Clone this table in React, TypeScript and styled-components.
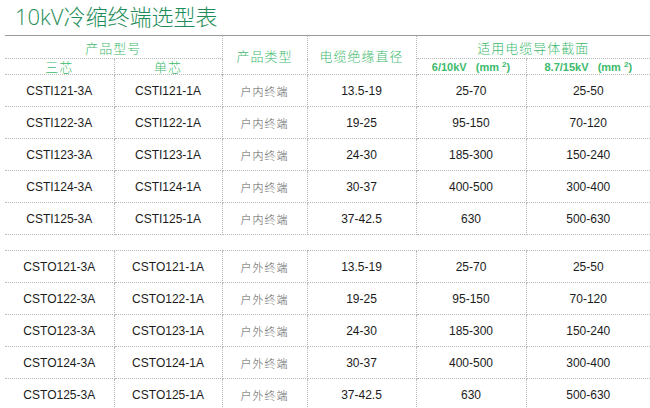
import styled, { createGlobalStyle } from 'styled-components'

const GlobalStyle = createGlobalStyle`
  html, body {
    margin: 0;
    padding: 0;
    background: #ffffff;
  }
`

const colors = {
  title: '#1d8c58',
  head: '#3dba6c',
  text: '#1c1c1c',
  kind: '#5e5e5e',
  dot: '#b9b9b9',
  rule: '#9a9a9a',
}

const Page = styled.div`
  width: 650px;
  height: 408px;
  overflow: hidden;
  background: #fff;
`

const Title = styled.h1`
  margin: 0;
  padding-left: 15px;
  height: 35px;
  line-height: 32px;
  font-family: 'Open Sans', 'Noto Sans CJK SC', sans-serif;
  font-size: 22px;
  font-weight: 300;
  color: ${colors.title};
  white-space: nowrap;
`

const Table = styled.table`
  margin-left: 5px;
  width: 645px;
  table-layout: fixed;
  border-collapse: collapse;
  border-top: 1px solid ${colors.rule};
`

const HeadRow = styled.tr<{ h: number }>`
  height: ${({ h }) => h}px;
`

const Row = styled.tr`
  height: 32px;
`

const Spacer = styled.tr`
  height: 16px;
  td {
    border-left: none;
    border-right: none;
  }
`

const Cell = styled.td`
  padding: 0;
  text-align: center;
  vertical-align: middle;
  border: 1px dotted ${colors.dot};
  &:first-child {
    border-left: none;
  }
  &:last-child {
    border-right: none;
  }
`

const HeadCell = styled(Cell)<{ sans?: boolean }>`
  color: ${colors.head};
  font-family: ${({ sans }) =>
    sans ? "'Liberation Sans', sans-serif" : "'Noto Sans CJK SC', sans-serif"};
  font-size: ${({ sans }) => (sans ? '11px' : '13px')};
  font-weight: ${({ sans }) => (sans ? 'bold' : '300')};
  letter-spacing: ${({ sans }) => (sans ? '0' : '1px')};
  line-height: 1;
  white-space: nowrap;

  sup {
    font-size: 8px;
    vertical-align: 4px;
  }
`

const DataCell = styled(Cell)`
  font-family: 'Liberation Sans', sans-serif;
  font-size: 12px;
  color: ${colors.text};
`

const KindCell = styled(Cell)`
  font-family: 'Noto Sans CJK SC', sans-serif;
  font-size: 11px;
  font-weight: 300;
  color: ${colors.kind};
  letter-spacing: 1px;
`

type Item = {
  three: string
  single: string
  kind: string
  dia: string
  low: string
  high: string
}

const ranges = [
  ['13.5-19', '25-70', '25-50'],
  ['19-25', '95-150', '70-120'],
  ['24-30', '185-300', '150-240'],
  ['30-37', '400-500', '300-400'],
  ['37-42.5', '630', '500-630'],
]

const build = (code: string, kind: string): Item[] =>
  ranges.map(([dia, low, high], i) => ({
    three: `${code}12${i + 1}-3A`,
    single: `${code}12${i + 1}-1A`,
    kind,
    dia,
    low,
    high,
  }))

const indoor = build('CSTI', '户内终端')
const outdoor = build('CSTO', '户外终端')

const DataRow = ({ item }: { item: Item }) => (
  <Row>
    <DataCell>{item.three}</DataCell>
    <DataCell>{item.single}</DataCell>
    <KindCell>{item.kind}</KindCell>
    <DataCell>{item.dia}</DataCell>
    <DataCell>{item.low}</DataCell>
    <DataCell>{item.high}</DataCell>
  </Row>
)

export default function App() {
  return (
    <Page>
      <GlobalStyle />
      <Title>10kV冷缩终端选型表</Title>
      <Table>
        <colgroup>
          <col style={{ width: 109 }} />
          <col style={{ width: 108 }} />
          <col style={{ width: 85 }} />
          <col style={{ width: 109 }} />
          <col style={{ width: 110 }} />
          <col style={{ width: 124 }} />
        </colgroup>
        <thead>
          <HeadRow h={23}>
            <HeadCell colSpan={2}>产品型号</HeadCell>
            <HeadCell rowSpan={2}>产品类型</HeadCell>
            <HeadCell rowSpan={2}>电缆绝缘直径</HeadCell>
            <HeadCell colSpan={2}>适用电缆导体截面</HeadCell>
          </HeadRow>
          <HeadRow h={16}>
            <HeadCell>三芯</HeadCell>
            <HeadCell>单芯</HeadCell>
            <HeadCell sans>
              6/10kV&nbsp;&nbsp;&nbsp;(mm&nbsp;<sup>2</sup>)
            </HeadCell>
            <HeadCell sans>
              8.7/15kV&nbsp;&nbsp;&nbsp;(mm&nbsp;<sup>2</sup>)
            </HeadCell>
          </HeadRow>
        </thead>
        <tbody>
          {indoor.map((item) => (
            <DataRow key={item.three} item={item} />
          ))}
          <Spacer>
            <Cell colSpan={6} />
          </Spacer>
          {outdoor.map((item) => (
            <DataRow key={item.three} item={item} />
          ))}
        </tbody>
      </Table>
    </Page>
  )
}
